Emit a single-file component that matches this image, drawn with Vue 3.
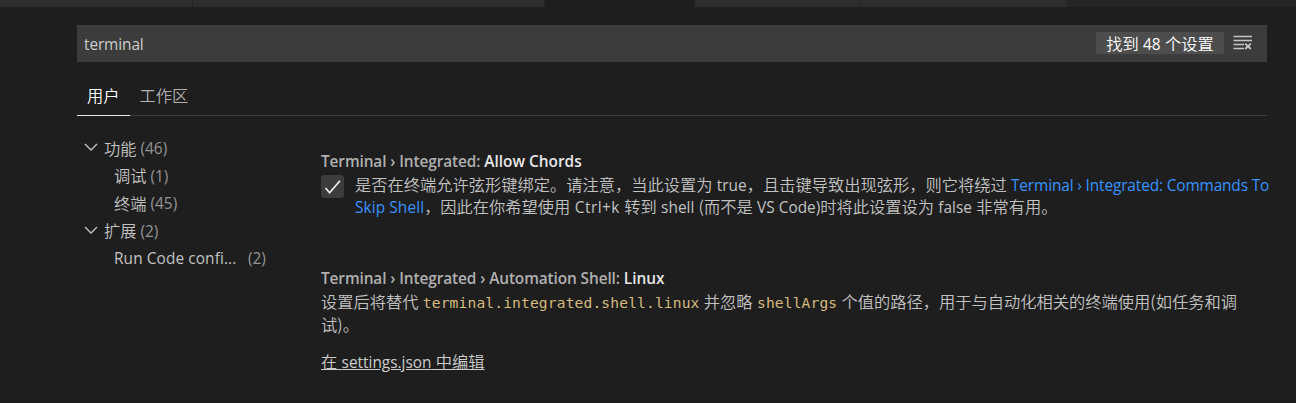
<script setup>
const tabs = [
  { id: 1, width: 193, active: false },
  { id: 2, width: 352, active: false },
  { id: 3, width: 150, active: true },
  { id: 4, width: 165, active: false },
  { id: 5, width: 208, active: false },
]
const toc = [
  { label: '功能', count: '(46)', group: true },
  { label: '调试', count: '(1)' },
  { label: '终端', count: '(45)' },
  { label: '扩展', count: '(2)', group: true },
  { label: 'Run Code confi...', count: '(2)', latin: true },
]
</script>

<template>
  <div class="editor">
    <div class="tabs">
      <div v-for="t in tabs" :key="t.id" class="tab" :class="{ active: t.active }" :style="{ width: t.width + 'px' }"></div>
    </div>
    <main class="settings">
      <div class="search">
        <span class="en query">terminal</span>
        <span class="found">找到 <span class="en">48</span> 个设置</span>
        <svg class="clear" width="20" height="16" viewBox="0 0 20 16" fill="none">
          <path d="M0.5 1.5H19M0.5 5.5H19M0.5 9.5H11M0.5 13.5H11" stroke="#c5c5c5" stroke-width="1.5" />
          <path d="M12.2 8.6L17.8 14M17.8 8.6L12.2 14" stroke="#c5c5c5" stroke-width="1.9" />
        </svg>
      </div>
      <nav class="scopes">
        <div class="scope on">用户</div>
        <div class="scope">工作区</div>
      </nav>
      <div class="body">
        <aside class="toc">
          <div v-for="item in toc" :key="item.label" class="row" :class="{ group: item.group }">
            <svg v-if="item.group" class="chevron" width="14" height="9" viewBox="0 0 14 9" fill="none">
              <path d="M1 1L7 7L13 1" stroke="#c5c5c5" stroke-width="1.3" />
            </svg>
            <span class="label" :class="{ en: item.latin, long: item.latin }">{{ item.label }}</span>
            <span class="en count">{{ item.count }}</span>
          </div>
        </aside>
        <section class="list">
          <article class="first">
            <h3><span>Terminal › Integrated: </span><b>Allow Chords</b></h3>
            <div class="checkline">
              <div class="checkbox">
                <svg width="23" height="23" viewBox="0 0 23 23" fill="none">
                  <path d="M4.5 13L8.6 17.7L19 5.8" stroke="#f0f0f0" stroke-width="1.7" />
                </svg>
              </div>
              <p>
                <span class="line">是否在终端允许弦形键绑定。请注意，当此设置为 <span class="en">true</span>，且击键导致出现弦形，则它将绕过 <a class="en">Terminal › Integrated: Commands To</a></span>
                <span class="line"><a class="en short">Skip Shell</a>，因此在你希望使用 <span class="en wide">Ctrl+k</span> 转到 <span class="en">shell</span> (而不是 <span class="en">VS Code)</span>时将此设置设为 <span class="en">false</span> 非常有用。</span>
              </p>
            </div>
          </article>
          <article class="second">
            <h3><span>Terminal › Integrated › Automation Shell: </span><b>Linux</b></h3>
            <p>
              <span class="line">设置后将替代 <code>terminal.integrated.shell.linux</code> 并忽略 <code>shellArgs</code> 个值的路径，用于与自动化相关的终端使用(如任务和调</span>
              <span class="line">试)。</span>
            </p>
            <div class="edit">在 <span class="en">settings.json</span> 中编辑</div>
          </article>
        </section>
      </div>
    </main>
    <div class="edge"></div>
  </div>
</template>

<style>
body {
  background: #1e1e1e;
}
</style>

<style scoped>
.editor {
  height: 403px;
  display: flex;
  flex-direction: column;
  overflow: hidden;
  background: #1e1e1e;
  color: #c2c2c2;
  font-family: "Noto Sans CJK SC", sans-serif;
  font-size: 16.25px;
  font-weight: 350;
  line-height: 22.75px;
  white-space: nowrap;
  word-spacing: 0.7px;
}
.en {
  font-family: "Open Sans", "Noto Sans", sans-serif;
  font-size: 15.4px;
  font-weight: 400;
  word-spacing: 0;
}
.en.wide {
  letter-spacing: 0.5px;
}
.tabs {
  display: flex;
  flex: none;
  height: 7px;
  background: #252526;
}
.tab {
  box-sizing: border-box;
  background: #2d2d2d;
  border-right: 1px solid #252526;
}
.tab.active {
  background: #1e1e1e;
}
.settings {
  flex: 1;
  padding: 18px 29px 0 77px;
}
.search {
  display: flex;
  align-items: center;
  height: 37px;
  padding: 0 14px 0 7px;
  background: #3c3c3c;
  color: #ccc;
}
.query {
  flex: 1;
  padding-top: 3px;
  letter-spacing: -0.1px;
}
.found {
  width: 128px;
  height: 22px;
  margin: 0 9px 1px 0;
  border-radius: 2px;
  background: #4d4d4d;
  color: #fff;
  text-align: center;
}
.clear {
  margin-bottom: 2px;
}
.scopes {
  display: flex;
  height: 53px;
  border-bottom: 1px solid #3c3c3c;
  color: #b0b0b0;
}
.scope {
  box-sizing: border-box;
  padding: 22px 10px 0;
  height: 54px;
}
.scope.on {
  color: #fff;
  border-bottom: 1px solid #e7e7e7;
}
.body {
  display: flex;
}
.toc {
  flex: none;
  width: 244px;
  padding-top: 19px;
}
.row {
  display: flex;
  align-items: center;
  height: 27.5px;
  padding-left: 37px;
}
.row.group {
  padding-left: 7px;
}
.chevron {
  margin: 0 6px 2px 0;
}
.label {
  padding-bottom: 1px;
}
.label.long {
  width: 134px;
  padding: 2px 0 0;
  letter-spacing: 0.1px;
}
.count {
  padding-top: 2px;
  margin-left: 4px;
  color: #949494;
}
.label.long + .count {
  margin-left: 0;
}
.first {
  padding-top: 35px;
}
h3 {
  margin: 0;
  font-family: "Open Sans", "Noto Sans", sans-serif;
  font-size: 15.4px;
  line-height: 22.5px;
  font-weight: 600;
  color: #b0b0b0;
  word-spacing: 0;
}
h3 span {
  white-space: pre;
  letter-spacing: -0.1px;
}
h3 b {
  font-weight: 600;
  color: #e7e7e7;
}
p {
  margin: 0;
}
.line {
  display: block;
  height: 22.75px;
}
.checkline {
  display: flex;
}
.checkline p {
  margin-top: -1px;
}
.checkbox {
  flex: none;
  width: 23px;
  height: 23px;
  margin: 1px 11px 0 0;
  border-radius: 3px;
  background: #3c3c3c;
}
a {
  color: #3794ff;
}
a.en {
  letter-spacing: -0.13px;
}
a.en.short {
  letter-spacing: 0.1px;
}
.second {
  padding-top: 49.5px;
}
.second p {
  padding-top: 0;
}
code {
  font-family: "DejaVu Sans Mono", monospace;
  font-size: 14.6px;
  letter-spacing: 0.14px;
  color: #d7ba7d;
}
.edit {
  display: inline-block;
  margin-top: 14.5px;
  color: #ccc;
  text-decoration: underline;
}
.edge {
  flex: none;
  height: 1px;
  background: #191919;
}
</style>
